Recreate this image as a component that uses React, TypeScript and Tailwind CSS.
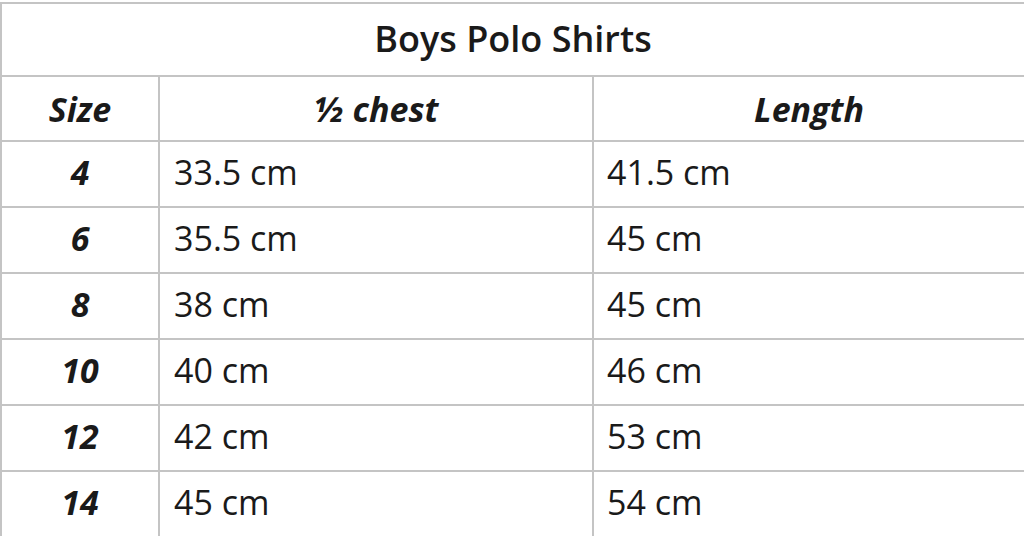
const rows = [
  { size: "4", chest: "33.5 cm", length: "41.5 cm" },
  { size: "6", chest: "35.5 cm", length: "45 cm" },
  { size: "8", chest: "38 cm", length: "45 cm" },
  { size: "10", chest: "40 cm", length: "46 cm" },
  { size: "12", chest: "42 cm", length: "53 cm" },
  { size: "14", chest: "45 cm", length: "54 cm" },
]

export default function App() {
  return (
    <div className="w-[1024px] h-[536px] overflow-hidden bg-white pt-[2px] font-['Open_Sans',sans-serif] text-[#1a1a1a]">
      <table className="w-[1026px] border-collapse table-fixed">
        <colgroup>
          <col className="w-[158px]" />
          <col className="w-[434px]" />
          <col />
        </colgroup>
        <thead>
          <tr className="h-[73px]">
            <th
              colSpan={3}
              className="border-2 border-[#c4c4c4] text-[36px] font-semibold leading-none pb-[2px]"
            >
              Boys Polo Shirts
            </th>
          </tr>
          <tr className="h-[65px]">
            <th className="border-2 border-[#c4c4c4] text-[34px] font-bold italic leading-none">Size</th>
            <th className="border-2 border-[#c4c4c4] text-[34px] font-bold italic leading-none">½ chest</th>
            <th className="border-2 border-[#c4c4c4] text-[34px] font-bold italic leading-none">Length</th>
          </tr>
        </thead>
        <tbody>
          {rows.map((r) => (
            <tr key={r.size} className="h-[66px]">
              <td className="border-2 border-[#c4c4c4] text-center text-[34px] font-bold italic leading-none pb-[4px]">
                {r.size}
              </td>
              <td className="border-2 border-[#c4c4c4] pl-[14px] text-[34px] leading-none pb-[4px]">{r.chest}</td>
              <td className="border-2 border-[#c4c4c4] pl-[13px] text-[34px] leading-none pb-[4px]">{r.length}</td>
            </tr>
          ))}
        </tbody>
      </table>
    </div>
  )
}
